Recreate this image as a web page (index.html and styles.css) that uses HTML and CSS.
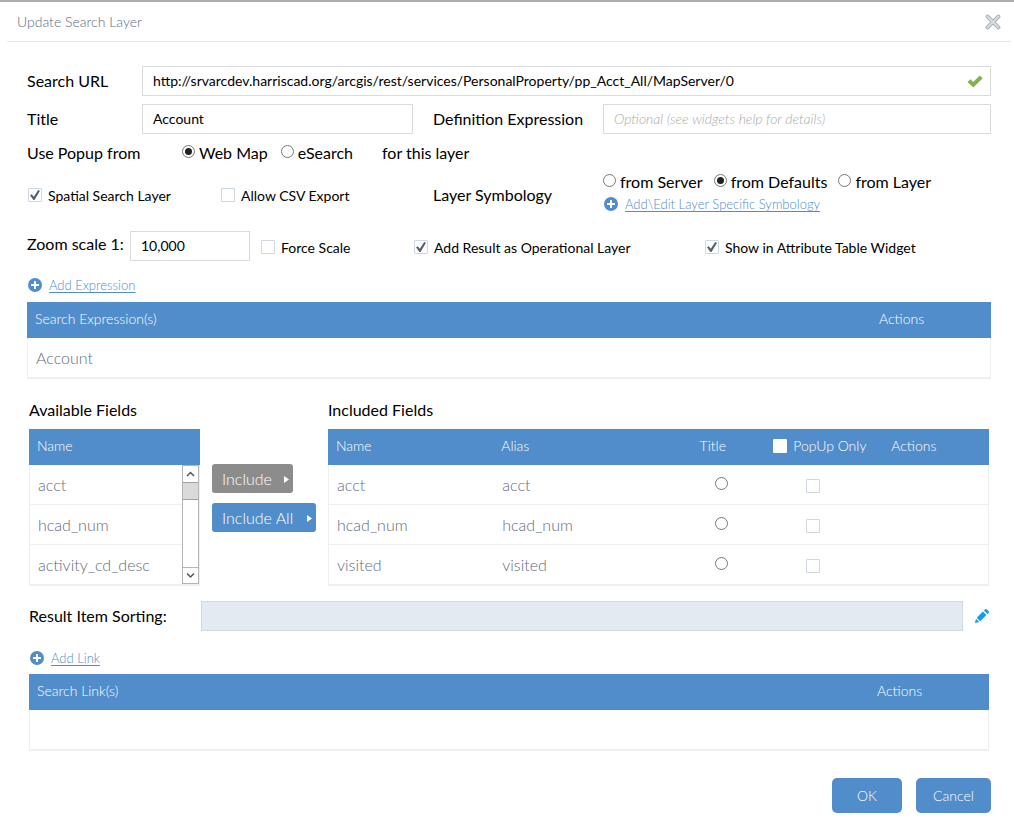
FILE: index.html
```html
<!DOCTYPE html>
<html lang="en">
<head>
<meta charset="utf-8">
<title>Update Search Layer</title>
<link rel="stylesheet" href="styles.css">
</head>
<body>
<svg class="defs" aria-hidden="true">
  <symbol id="plus" viewBox="0 0 14 14"><circle cx="7" cy="7" r="7" fill="#508dca"/><path d="M7 3v8M3 7h8" stroke="#fff" stroke-width="2"/></symbol>
</svg>
<form class="dialog">
  <header class="titlebar">
    <h1>Update Search Layer</h1>
    <button type="button" class="close" aria-label="Close">
      <svg width="16" height="16" viewBox="0 0 16 16"><path d="M2.6 2.6l10.8 10.8M13.4 2.6L2.6 13.4" stroke="#a3adb5" stroke-width="4" stroke-linecap="round"/><path d="M2.6 2.6l10.8 10.8M13.4 2.6L2.6 13.4" stroke="#d3dae0" stroke-width="2.2" stroke-linecap="round"/></svg>
    </button>
  </header>
  <main class="content">
    <div class="row">
      <label class="label-main" for="url">Search URL</label>
      <div class="field valid">
        <input id="url" type="text" class="text" value="http://srvarcdev.harriscad.org/arcgis/rest/services/PersonalProperty/pp_Acct_All/MapServer/0">
        <svg class="tick" width="16" height="13" viewBox="0 0 16 13"><path d="M0.5 7l3-2.7 2.7 2.6L12.8 0.5 15.7 3.3 6.3 12.6z" fill="#82b548"/></svg>
      </div>
    </div>
    <div class="row">
      <label class="label-main" for="title">Title</label>
      <div class="field title-field"><input id="title" type="text" class="text" value="Account"></div>
      <label class="label-side" for="definition">Definition Expression</label>
      <div class="field"><input id="definition" type="text" class="text" placeholder="Optional (see widgets help for details)"></div>
    </div>
    <div class="row popup-row">
      <span class="popup-label">Use Popup from</span>
      <label class="choice"><input type="radio" name="popup" checked>Web Map</label>
      <label class="choice second"><input type="radio" name="popup">eSearch</label>
      <span class="popup-tail">for this layer</span>
    </div>
    <div class="row symbology-row">
      <label class="check col-spatial"><input type="checkbox" checked>Spatial Search Layer</label>
      <label class="check col-csv"><input type="checkbox">Allow CSV Export</label>
      <span class="label-symbology">Layer Symbology</span>
      <div class="symbology">
        <div class="choices">
          <label class="choice"><input type="radio" name="symbology">from Server</label>
          <label class="choice"><input type="radio" name="symbology" checked>from Defaults</label>
          <label class="choice"><input type="radio" name="symbology">from Layer</label>
        </div>
        <a class="add" href="#"><svg width="14" height="14"><use href="#plus"/></svg><span>Add\Edit Layer Specific Symbology</span></a>
      </div>
    </div>
    <div class="row zoom-row">
      <label class="zoom-label" for="zoom">Zoom scale 1:</label>
      <div class="field zoom-field"><input id="zoom" type="text" class="text" value="10,000"></div>
      <label class="check col-force"><input type="checkbox">Force Scale</label>
      <label class="check col-result"><input type="checkbox" checked>Add Result as Operational Layer</label>
      <label class="check"><input type="checkbox" checked>Show in Attribute Table Widget</label>
    </div>
    <a class="add add-expression" href="#"><svg width="14" height="14"><use href="#plus"/></svg><span>Add Expression</span></a>
    <table class="grid">
      <colgroup><col><col class="c-actions"></colgroup>
      <thead><tr><th>Search Expression(s)</th><th>Actions</th></tr></thead>
      <tbody><tr><td>Account</td><td></td></tr></tbody>
    </table>

    <div class="lower">
      <div class="fields">
        <section class="available">
          <h2>Available Fields</h2>
          <div class="list-head">Name</div>
          <div class="list">
            <ul>
              <li>acct</li>
              <li>hcad_num</li>
              <li>activity_cd_desc</li>
            </ul>
            <div class="scrollbar" aria-hidden="true">
              <svg class="arrow" viewBox="0 0 15 15"><path d="M4 9.5L7.5 6 11 9.5" fill="none" stroke="#555" stroke-width="1.5"/></svg>
              <div class="thumb"></div>
              <svg class="arrow down" viewBox="0 0 15 15"><path d="M4 5.5L7.5 9 11 5.5" fill="none" stroke="#555" stroke-width="1.5"/></svg>
            </div>
          </div>
        </section>
        <div class="movers">
          <button type="button" class="move off">Include<svg width="5" height="7"><path d="M0 0l5 3.500-5 3.500z" fill="#fff"/></svg></button>
          <button type="button" class="move">Include All<svg width="5" height="7"><path d="M0 0l5 3.500-5 3.500z" fill="#fff"/></svg></button>
        </div>
        <section class="included">
          <h2>Included Fields</h2>
          <table class="grid">
            <colgroup><col class="c-name"><col class="c-alias"><col class="c-title"><col class="c-popup"><col></colgroup>
            <thead><tr><th>Name</th><th>Alias</th><th>Title</th><th><label class="check all"><input type="checkbox">PopUp Only</label></th><th>Actions</th></tr></thead>
            <tbody>
              <tr><td>acct</td><td>acct</td><td class="pick"><input type="radio" name="titlefield" aria-label="Use acct as title"></td><td class="only"><input type="checkbox" aria-label="acct popup only"></td><td></td></tr>
              <tr><td>hcad_num</td><td>hcad_num</td><td class="pick"><input type="radio" name="titlefield" aria-label="Use hcad_num as title"></td><td class="only"><input type="checkbox" aria-label="hcad_num popup only"></td><td></td></tr>
              <tr><td>visited</td><td>visited</td><td class="pick"><input type="radio" name="titlefield" aria-label="Use visited as title"></td><td class="only"><input type="checkbox" aria-label="visited popup only"></td><td></td></tr>
            </tbody>
          </table>
        </section>
      </div>
      <div class="sorting">
        <label for="sorting">Result Item Sorting:</label>
        <input id="sorting" type="text" class="sort-box" readonly>
        <button type="button" class="edit" aria-label="Edit sorting">
          <svg width="14" height="14" viewBox="0 0 14 14" fill="#149cf0"><path d="M0 14l.9-4.300 3.400 3.400zM1.700 8.800l6.200-6.200 3.500 3.500-6.200 6.200zM8.900 1.600L10.300.3q.7-.6 1.400 0l2 2q.6.7 0 1.400l-1.300 1.400z"/></svg>
        </button>
      </div>
      <a class="add add-link" href="#"><svg width="14" height="14"><use href="#plus"/></svg><span>Add Link</span></a>
      <table class="grid">
        <colgroup><col><col class="c-actions"></colgroup>
        <thead><tr><th>Search Link(s)</th><th>Actions</th></tr></thead>
        <tbody><tr><td></td><td></td></tr></tbody>
      </table>
    </div>
    <footer class="footer">
      <button type="button" class="btn">OK</button>
      <button type="button" class="btn">Cancel</button>
    </footer>
  </main>
</form>
</body>
</html>
```
FILE: styles.css
```css
* { box-sizing: border-box; }
body {
  margin: 0;
  background: #fff;
  color: #000;
  font: 16px/20px Lato, "Open Sans", sans-serif;
}
input, button { font: inherit; margin: 0; }
h1, h2 { margin: 0; font-weight: 400; }
.defs { position: absolute; width: 0; height: 0; }
.dialog { border-top: 2px solid #adadad; }

.titlebar {
  display: flex;
  align-items: center;
  justify-content: space-between;
  height: 40px;
  margin: 0 3px 0 7px;
  padding: 0 10px;
  border-bottom: 1px solid #e3eaef;
}
.titlebar h1 { font-size: 14px; color: #6b778b; }
.close, .edit { display: flex; padding: 0; border: 0; background: none; }

.content { padding: 24px 23px 12px 27px; }
.row { display: flex; align-items: center; }
.row + .row { margin-top: 8px; }
.label-main { width: 115px; flex: none; }
.label-side { width: 170px; flex: none; margin-left: 20px; }
.field { position: relative; flex: 1; }
.title-field { flex: 0 1 271px; }
.text {
  display: block;
  width: 100%;
  height: 30px;
  padding: 0 10px 2px;
  border: 1px solid #d9dcdf;
  background: #fff;
  color: #000;
  font-size: 14px;
}
.text::placeholder { color: #aaa; font-style: italic; opacity: 1; }
.tick { position: absolute; right: 8px; top: 9px; }

.choice { display: flex; align-items: center; gap: 4px; white-space: nowrap; }
.check { display: flex; align-items: center; gap: 6px; font-size: 14px; white-space: nowrap; }

input[type="radio"] {
  appearance: none;
  display: grid;
  place-items: center;
  flex: none;
  width: 13px;
  height: 13px;
  border: 1px solid #777;
  border-radius: 50%;
  background: #fff;
}
.choice input { margin-bottom: 3px; }
input[type="radio"]:checked::before {
  content: "";
  width: 7px;
  height: 7px;
  border-radius: 50%;
  background: #222;
}
input[type="checkbox"] {
  appearance: none;
  display: grid;
  place-items: center;
  flex: none;
  width: 14px;
  height: 14px;
  border: 1px solid #cfd8e1;
  border-radius: 1px;
  background: #fff;
}
.check input { margin-bottom: 2px; }
input[type="checkbox"]:checked::before {
  content: "";
  width: 10px;
  height: 10px;
  background: #55606f;
  clip-path: polygon(0 52%, 18% 42%, 38% 68%, 82% 0, 100% 8%, 45% 100%, 34% 100%);
}

.row.popup-row { margin-top: 9px; }
.popup-label { width: 155px; }
.choice.second { margin-left: 13px; }
.popup-tail { margin-left: 29px; }

.row.symbology-row { margin-top: 9px; }
.symbology-row .check { margin-top: 6px; }
.col-spatial { width: 193px; margin-left: 1px; }
.col-csv { width: 212px; }
.label-symbology { width: 170px; margin-top: 4px; }
.symbology { display: grid; gap: 2px; }
.choices { display: flex; gap: 11px; }
.symbology .add { margin-left: 1px; }

.row.zoom-row { margin-top: 17px; }
.zoom-label { width: 103px; margin-bottom: 4px; white-space: nowrap; }
.zoom-field { flex: 0 1 120px; }
.zoom-row .check { margin-top: 4px; }
.col-force { width: 153px; margin-left: 11px; }
.col-result { width: 291px; }

.add {
  display: flex;
  align-items: center;
  width: max-content;
  gap: 7px;
  color: #508dca;
  font-size: 13px;
  text-decoration: none;
}
.add span { text-decoration: underline; text-underline-offset: 2px; }
.add-expression { margin: 14px 0 7px 1px; }

.grid { width: 100%; border-collapse: separate; border-spacing: 0; table-layout: fixed; }
.grid th, .list-head {
  height: 36px;
  padding: 0 8px 2px;
  background: #508dca;
  color: #fff;
  font-size: 14px;
  font-weight: 400;
  text-align: left;
}
.grid td { height: 40px; padding: 0 9px; border-bottom: 1px solid #edf0f3; color: #929cae; }
.grid td:first-child { padding-left: 8px; border-left: 1px solid #edf0f3; }
.grid td:last-child { border-right: 1px solid #edf0f3; }
.grid tbody tr:last-child td { height: 41px; border-bottom-width: 2px; }
.c-actions { width: 120px; }
.c-name { width: 25%; }
.c-alias { width: 30%; }
.c-title { width: 11%; }
.c-popup { width: 18%; }

.lower { margin: 0 2px; padding-top: 21px; }
h2 { font-size: 16px; margin-bottom: 9px; }
.fields { display: flex; }
.available { flex: none; width: 171px; }
.list-head { line-height: 34px; }
.list { display: flex; border: 1px solid #edf0f3; border-width: 0 1px 2px; }
.list ul { flex: 1; margin: 0; padding: 0; list-style: none; color: #929cae; }
.list li { height: 40px; padding-left: 8px; line-height: 40px; border-bottom: 1px solid #edf0f3; }
.list li:last-child { height: 39px; border-bottom: 0; }
.scrollbar { display: flex; flex-direction: column; width: 17px; border: 1px solid #b5b5b5; }
.arrow { width: 15px; height: 16px; }
.thumb { height: 18px; background: #dadada; border: solid #a0a0a0; border-width: 1px 0; }
.down { margin-top: auto; border-top: 1px solid #b5b5b5; }

.movers { display: flex; flex-direction: column; align-items: flex-start; gap: 10px; width: 128px; padding: 64px 0 0 12px; flex: none; }
.move {
  display: flex;
  align-items: center;
  justify-content: space-between;
  width: 104px;
  height: 29px;
  padding: 0 4px 0 10px;
  border: 0;
  border-radius: 3px;
  background: #508dca;
  color: #fff;
  white-space: nowrap;
}
.move svg { margin-top: 2px; }
.move.off { width: 81px; background: #8c8c8c; }
.included { flex: 1; }
.all { margin-left: 1px; }
.all input { margin-bottom: 0; border-color: #fff; }
.grid .pick { padding-left: 23px; }
.grid .pick input { margin-bottom: 3px; }
.grid .only { padding-left: 42px; }
.grid .only input { margin-top: 2px; }

.sorting { display: flex; align-items: center; margin-top: 15px; }
.sorting label { width: 172px; }
.sort-box { flex: 1; height: 30px; border: 1px solid #cfd9e2; background: #e3eaf2; }
.edit { margin-left: 12px; }
.add-link { margin: 17px 0 6px 1px; }

.footer { display: flex; justify-content: flex-end; gap: 14px; margin-top: 27px; }
.btn { width: 70px; height: 35px; padding: 0; border: 0; border-radius: 5px; background: #508dca; color: #fff; font-size: 14px; }
.btn + .btn { width: 75px; }
.titlebar h1, .add, .grid th, .grid td, .list-head, .list ul, .move, .btn, .text::placeholder { font-weight: 300; }
.titlebar h1, .grid td, .list ul { color: #5f6b80; }
```
